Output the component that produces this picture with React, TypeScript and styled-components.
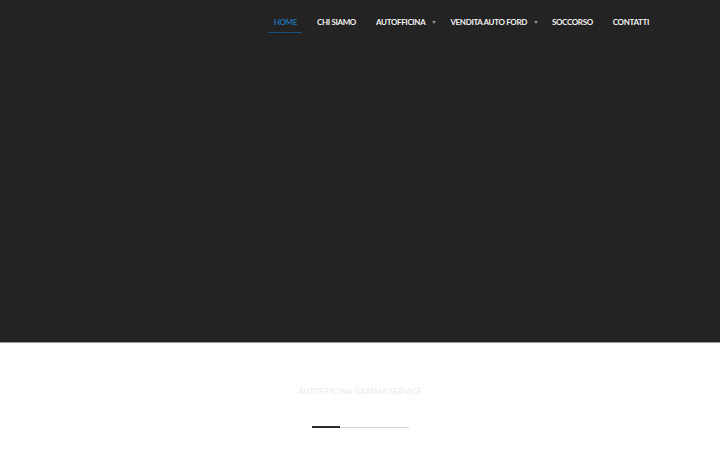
import React from 'react';
import styled, { createGlobalStyle } from 'styled-components';

const GlobalStyle = createGlobalStyle`
  html, body {
    margin: 0;
    padding: 0;
    background: #ffffff;
    font-family: Lato, "Open Sans", Arial, sans-serif;
  }
`;

const Hero = styled.section`
  height: 343px;
  background: #232323;
  border-bottom: 1px solid #9a9a9a;
  box-sizing: border-box;
`;

const Nav = styled.nav`
  display: flex;
  justify-content: flex-end;
  align-items: stretch;
  height: 33px;
  padding: 0 61px 0 0;
`;

const NavItem = styled.a<{ $active?: boolean; $caret?: boolean }>`
  display: flex;
  align-items: center;
  gap: 7px;
  padding-top: 12px;
  padding-left: ${(p) => (p.$active ? '6px' : '10px')};
  padding-right: ${(p) => (p.$active ? '5px' : p.$caret ? '4px' : '10px')};
  margin-right: ${(p) => (p.$active ? '5px' : '0')};
  font-size: 8px;
  font-weight: 700;
  letter-spacing: -0.35px;
  color: ${(p) => (p.$active ? '#1e6fae' : '#f2f2f2')};
  text-decoration: none;
  text-transform: uppercase;
  white-space: nowrap;
  box-sizing: border-box;
  border-bottom: 1px solid ${(p) => (p.$active ? '#1c4f78' : 'transparent')};
`;

const Caret = styled.span`
  width: 0;
  height: 0;
  border-left: 2.5px solid transparent;
  border-right: 2.5px solid transparent;
  border-top: 3px solid #8a8a8a;
`;

const Content = styled.section`
  display: flex;
  flex-direction: column;
  align-items: center;
  padding-top: 43px;
`;

const Title = styled.h2`
  margin: 0;
  font-size: 8.2px;
  font-weight: 400;
  color: #eaeaea;
  letter-spacing: 0.1px;
  text-transform: uppercase;
`;

const Divider = styled.div`
  display: flex;
  width: 97px;
  margin-top: 30px;
  align-items: flex-end;
`;

const DividerDark = styled.div`
  width: 28px;
  height: 2px;
  background: #2b2b2b;
`;

const DividerLight = styled.div`
  flex: 1;
  height: 1px;
  background: #d6d6d6;
`;

const items = [
  { label: 'Home', active: true },
  { label: 'Chi siamo' },
  { label: 'Autofficina', caret: true },
  { label: 'Vendita auto Ford', caret: true },
  { label: 'Soccorso' },
  { label: 'Contatti' },
];

export default function App() {
  return (
    <>
      <GlobalStyle />
      <Hero>
        <Nav>
          {items.map((item) => (
            <NavItem key={item.label} href="#" $active={item.active} $caret={item.caret}>
              {item.label}
              {item.caret && <Caret />}
            </NavItem>
          ))}
        </Nav>
      </Hero>
      <Content>
        <Title>Autofficina Gamma Service</Title>
        <Divider>
          <DividerDark />
          <DividerLight />
        </Divider>
      </Content>
    </>
  );
}
